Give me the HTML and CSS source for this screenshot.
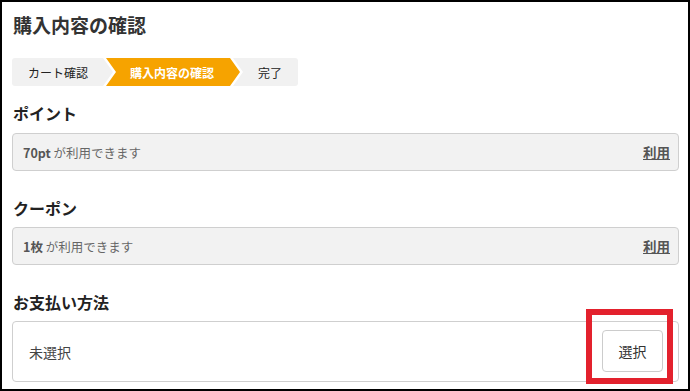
FILE: index.html
```html
<!DOCTYPE html>
<html lang="ja">

<head>
  <meta charset="UTF-8">
  <meta name="viewport" content="width=device-width, initial-scale=1.0">
  <title>購入内容の確認</title>
  <link rel="stylesheet" href="styles.css">
</head>

<body>
  <div class="page">
    <h1 class="title">購入内容の確認</h1>

    <!-- ステップ -->
    <div class="steps">
      <div class="step step-first">カート確認</div>
      <div class="step step-mid active">購入内容の確認</div>
      <div class="step step-last">完了</div>
    </div>

    <h2 class="sec-title first">ポイント</h2>
    <div class="use-box">
      <p class="use-text"><b>70pt</b> が利用できます</p>
      <a class="use-link" href="#">利用</a>
    </div>

    <h2 class="sec-title">クーポン</h2>
    <div class="use-box">
      <p class="use-text"><b>1枚</b> が利用できます</p>
      <a class="use-link" href="#">利用</a>
    </div>

    <h2 class="sec-title">お支払い方法</h2>
    <div class="pay-box">
      <p class="pay-text">未選択</p>
      <div class="pay-btn-wrap">
        <button class="pay-btn" type="button">選択</button>
        <span class="mark"></span>
      </div>
    </div>
  </div>
</body>

</html>
```

FILE: styles.css
```css
* {
  padding: 0;
  margin: 0;
  box-sizing: border-box;
}

body {
  font-family: "Noto Sans CJK JP", "Noto Sans", sans-serif;
  color: #333;
  background: #fff;
}

.page {
  height: 391px;
  border: 2px solid #000;
  padding: 9px 9px 0 10px;
  overflow: hidden;
}

.title {
  font-size: 19px;
  font-weight: bold;
  line-height: 28px;
  color: #333;
  padding-left: 1px;
}

/* ステップ */
.steps {
  display: flex;
  margin-top: 19px;
  height: 28px;
}

.step {
  display: flex;
  align-items: center;
  height: 28px;
  font-size: 12px;
  color: #222;
  background: #f1f1f1;
}

.step-first {
  width: 101px;
  padding-left: 16px;
  border-radius: 3px 0 0 3px;
  clip-path: polygon(0 0, calc(100% - 10px) 0, 100% 50%, calc(100% - 10px) 100%, 0 100%);
}

.step-mid {
  width: 134px;
  margin-left: -7px;
  padding-left: 24px;
  clip-path: polygon(0 0, calc(100% - 10px) 0, 100% 50%, calc(100% - 10px) 100%, 0 100%, 10px 50%);
}

.step-last {
  width: 65px;
  margin-left: -7px;
  padding-left: 25px;
  border-radius: 0 3px 3px 0;
  clip-path: polygon(0 0, 100% 0, 100% 100%, 0 100%, 10px 50%);
}

.step.active {
  background: #f6a300;
  color: #fff;
  font-weight: bold;
}

/* セクション */
.sec-title {
  font-size: 16px;
  font-weight: bold;
  line-height: 24px;
  color: #222;
  margin: 25px 0 7px 1px;
}

.sec-title.first {
  margin-top: 15px;
  margin-bottom: 8px;
}

.use-box {
  display: flex;
  align-items: center;
  justify-content: space-between;
  height: 38px;
  padding: 0 8px 0 10px;
  border: 1px solid #cfcfcf;
  border-radius: 4px;
  background: #f2f2f2;
}

.use-text {
  font-size: 12.5px;
  color: #666;
}

.use-text b {
  color: #555;
}

.use-link {
  font-size: 13.5px;
  font-weight: bold;
  color: #555;
  text-decoration: underline;
}

.pay-box {
  display: flex;
  align-items: center;
  justify-content: space-between;
  height: 61px;
  padding: 0 15px 0 16px;
  border: 1px solid #cfcfcf;
  border-radius: 4px;
  background: #fff;
}

.pay-text {
  font-size: 14px;
  color: #444;
}

.pay-btn-wrap {
  position: relative;
  margin-top: -1px;
}

.pay-btn {
  display: block;
  width: 61px;
  height: 42px;
  font-family: inherit;
  font-size: 14px;
  color: #333;
  background: #fff;
  border: 1px solid #ccc;
  border-radius: 4px;
}

/* 赤い枠（注釈） */
.mark {
  position: absolute;
  left: -16px;
  top: -21px;
  width: 87px;
  height: 75px;
  border: 6px solid #e3212d;
}
```
